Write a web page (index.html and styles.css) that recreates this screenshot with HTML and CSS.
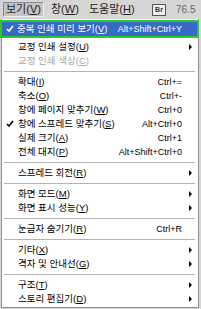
FILE: index.html
```html
<!DOCTYPE html>
<html>
<head>
<meta charset="utf-8">
<link rel="stylesheet" href="styles.css">
</head>
<body>
<div class="menubar">
  <div class="mb-item pressed">보기(<u>V</u>)</div>
  <div class="mb-item">창(<u>W</u>)</div>
  <div class="mb-item">도움말(<u>H</u>)</div>
  <div class="br">Br</div>
  <div class="zoom">76.5</div>
</div>
<div class="menu">
  <div class="row hl">
    <span class="chk"><svg width="8" height="8" viewBox="0 0 8 8"><path d="M1 4 L3 6 L7 1" fill="none" stroke="#fff" stroke-width="1.6"/></svg></span>
    <span class="lbl">중복 인쇄 미리 보기(<u>V</u>)</span>
    <span class="sc">Alt+Shift+Ctrl+Y</span>
    <span class="ar"></span>
  </div>
  <div class="row"><span class="chk"></span><span class="lbl">교정 인쇄 설정(<u>U</u>)</span><span class="sc"></span><span class="ar"><i class="tri"></i></span></div>
  <div class="row dis"><span class="chk"></span><span class="lbl">교정 인쇄 색상(<u>C</u>)</span><span class="sc"></span><span class="ar"></span></div>
  <div class="sep"></div>
  <div class="row"><span class="chk"></span><span class="lbl">확대(<u>I</u>)</span><span class="sc">Ctrl+=</span><span class="ar"></span></div>
  <div class="row"><span class="chk"></span><span class="lbl">축소(<u>O</u>)</span><span class="sc">Ctrl+-</span><span class="ar"></span></div>
  <div class="row"><span class="chk"></span><span class="lbl">창에 페이지 맞추기(<u>W</u>)</span><span class="sc">Ctrl+0</span><span class="ar"></span></div>
  <div class="row"><span class="chk"><svg width="8" height="8" viewBox="0 0 8 8"><path d="M1 4 L3 6 L7 1" fill="none" stroke="#000" stroke-width="1.6"/></svg></span><span class="lbl">창에 스프레드 맞추기(<u>S</u>)</span><span class="sc">Alt+Ctrl+0</span><span class="ar"></span></div>
  <div class="row"><span class="chk"></span><span class="lbl">실제 크기(<u>A</u>)</span><span class="sc">Ctrl+1</span><span class="ar"></span></div>
  <div class="row"><span class="chk"></span><span class="lbl">전체 대지(<u>P</u>)</span><span class="sc">Alt+Shift+Ctrl+0</span><span class="ar"></span></div>
  <div class="sep"></div>
  <div class="row"><span class="chk"></span><span class="lbl">스프레드 회전(<u>R</u>)</span><span class="sc"></span><span class="ar"><i class="tri"></i></span></div>
  <div class="sep"></div>
  <div class="row"><span class="chk"></span><span class="lbl">화면 모드(<u>M</u>)</span><span class="sc"></span><span class="ar"><i class="tri"></i></span></div>
  <div class="row"><span class="chk"></span><span class="lbl">화면 표시 성능(<u>Y</u>)</span><span class="sc"></span><span class="ar"><i class="tri"></i></span></div>
  <div class="sep"></div>
  <div class="row"><span class="chk"></span><span class="lbl">눈금자 숨기기(<u>R</u>)</span><span class="sc">Ctrl+R</span><span class="ar"></span></div>
  <div class="sep"></div>
  <div class="row"><span class="chk"></span><span class="lbl">기타(<u>X</u>)</span><span class="sc"></span><span class="ar"><i class="tri"></i></span></div>
  <div class="row"><span class="chk"></span><span class="lbl">격자 및 안내선(<u>G</u>)</span><span class="sc"></span><span class="ar"><i class="tri"></i></span></div>
  <div class="sep"></div>
  <div class="row"><span class="chk"></span><span class="lbl">구조(<u>T</u>)</span><span class="sc"></span><span class="ar"><i class="tri"></i></span></div>
  <div class="row"><span class="chk"></span><span class="lbl">스토리 편집기(<u>D</u>)</span><span class="sc"></span><span class="ar"><i class="tri"></i></span></div>
</div>
</body>
</html>
```

FILE: styles.css
```css
html, body {
  margin: 0;
  padding: 0;
  background: #d6d6d6;
  width: 201px;
  height: 309px;
  overflow: hidden;
  font-family: "Liberation Sans", "Noto Sans CJK KR", sans-serif;
  font-size: 9px;
  color: #000;
}
u { text-decoration: underline; text-underline-offset: 1px; }
.menubar {
  height: 19px;
  display: flex;
  align-items: center;
  background: #d6d6d6;
  padding-left: 3px;
  white-space: nowrap;
}
.mb-item {
  height: 15px;
  line-height: 15px;
  padding: 0 2px;
  font-size: 11px;
  color: #222;
  box-sizing: border-box;
  flex: none;
}
.mb-item.pressed {
  width: 41px;
  margin-right: 5px;
  background: #c4c4c4;
  border: 1px solid #8a8a8a;
  border-right-color: #f0f0f0;
  border-bottom-color: #f0f0f0;
  line-height: 13px;
}
.mb-item:nth-child(2) { width: 34px; margin-right: 4px; }
.mb-item:nth-child(3) { width: 60px; }
.br {
  margin-left: 5px;
  width: 14px;
  height: 12px;
  background: #f0f0f0;
  border: 1px solid #555;
  box-sizing: border-box;
  font-size: 7px;
  font-weight: bold;
  color: #333;
  display: flex;
  align-items: center;
  justify-content: center;
  flex: none;
}
.zoom {
  margin-left: 10px;
  color: #666;
  font-size: 10px;
  flex: none;
}
.menu {
  margin: 0 2px 0 1px;
  background: #fff;
  border: 1px solid #8f8f8f;
  border-top: none;
  padding: 1px 0 1px 0;
}
.row {
  display: grid;
  grid-template-columns: 15px 1fr auto 16px;
  align-items: center;
  height: 14px;
  line-height: 14px;
  white-space: nowrap;
  overflow: hidden;
}
.row .lbl { padding-left: 1px; font-size: 9.5px; }
.chk { display: flex; justify-content: center; align-items: center; height: 14px; }
.ar { display: flex; justify-content: center; align-items: center; height: 14px; }
.tri {
  display: block;
  width: 0;
  height: 0;
  border-top: 3px solid transparent;
  border-bottom: 3px solid transparent;
  border-left: 3px solid #000;
}
.row.hl {
  margin: 0 -1px 2px -2px;
  height: 18px;
  line-height: 14px;
  box-sizing: border-box;
  border: 2px solid #2ec82e;
  background: #356ac6;
  color: #fff;
  grid-template-columns: 15px 1fr auto 15px;
}
.row.hl .lbl { padding-left: 0; }
.row.dis { color: #a8a8a8; }
.sep {
  height: 1px;
  margin: 3px 3px 2px 2px;
  background: #b4b4b4;
  border-bottom: 1px solid #fff;
}
```
